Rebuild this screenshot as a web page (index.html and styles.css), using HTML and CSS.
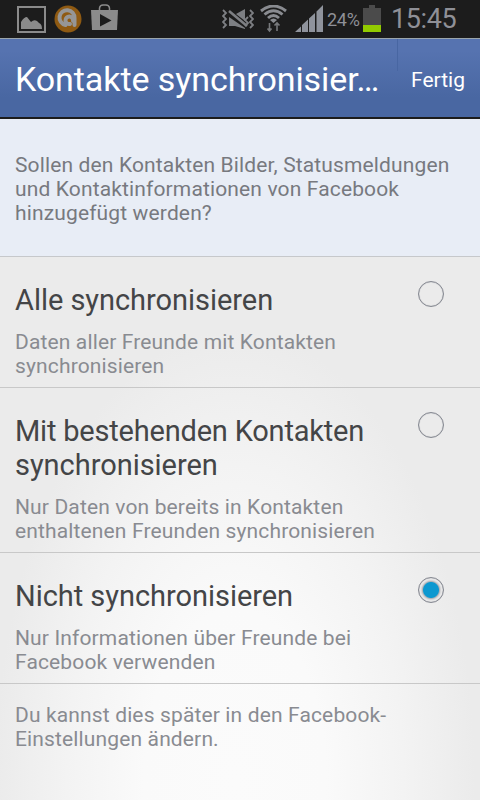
FILE: index.html
```html
<!DOCTYPE html>
<html lang="de">
<head>
    <meta charset="UTF-8">
    <meta name="viewport" content="width=device-width, initial-scale=1.0">
    <title>Kontakte synchronisieren</title>
    <link rel="stylesheet" href="styles.css">
</head>
<body>
    <div class="statusbar">
        <svg class="icon-picture" width="29" height="27" viewBox="0 0 29 27">
            <rect x="1" y="1" width="27" height="25" fill="none" stroke="#8b8b8b" stroke-width="2"/>
            <path d="M4 23V16Q7 11 10 11L14 16Q17 13 20 15L22 17Q25 18 25 23Z" fill="#8b8b8b"/>
        </svg>
        <svg class="icon-avast" width="28" height="28" viewBox="0 0 28 28">
            <circle cx="14" cy="14" r="13.500" fill="#8f5a12"/>
            <path d="M11.500 20A7.500 7.500 0 1 1 20.500 13V20M19 16A3.800 3.800 0 1 0 16 19" fill="none" stroke="#969696" stroke-width="4" stroke-linecap="round" stroke-linejoin="round"/>
        </svg>
        <svg class="icon-store" width="27" height="27" viewBox="0 0 27 27">
            <path d="M8.500 7V4Q9 1 12 1H15Q18 1 18.500 4V7" fill="none" stroke="#8b8b8b" stroke-width="1.500"/>
            <path d="M0 6H27L26 26H1Z" fill="#8b8b8b"/>
            <path d="M9 10L20.500 16.500L9 22.500Z" fill="#1c1c1c"/>
        </svg>
        <div class="status-right">
            <svg class="icon-vibrate" width="32" height="21" viewBox="0 0 32 21">
                <path d="M1 1L4 4L1 7L4 10L1 13L4 16L1 19M28 1L31 4L28 7L31 10L28 13L31 16L28 19M26 8L23 11L26 14L23 17" fill="none" stroke="#7d7f83" stroke-width="1.800"/>
                <path d="M7 8V17H13L23 20V19ZM14 5L23 0V12Z" fill="#7d7f83"/>
                <path d="M7 2L25 17" stroke="#7d7f83" stroke-width="2.500"/>
            </svg>
            <svg class="icon-wifi" width="27" height="28" viewBox="0 0 27 28">
                <path d="M1 6Q13.500 -4 26 6M4.500 9.500Q13.500 2 22.500 9.500M8 13Q13.500 8 19 13" fill="none" stroke="#898b90" stroke-width="2.900"/>
                <path d="M10 15Q13.500 12 17 15L13.500 18Z" fill="#898b90"/>
                <path d="M9.500 18V26M7.500 23.500L9.500 26L11.500 23.500M17 26V18M14.500 20.500L17 18L19.500 20.500" fill="none" stroke="#77797c" stroke-width="1.600"/>
            </svg>
            <svg class="icon-signal" width="29" height="27" viewBox="0 0 29 27">
                <path d="M0 27L6 21.500V27ZM7 27V20L13 14.500V27ZM14 27V13.500L20 8V27ZM21.500 27V6.500L28 0V27Z" fill="#8f939c"/>
            </svg>
            <span class="percent">24%</span>
            <svg class="icon-battery" width="18" height="27" viewBox="0 0 18 27">
                <path d="M6 0H12V3H18V20H0V3H6Z" fill="#4b4b4b"/>
                <rect y="20" width="18" height="7" fill="#92cb00"/>
            </svg>
            <span class="clock">15:45</span>
        </div>
    </div>
    <header class="titlebar">
        <h1>Kontakte synchronisier…</h1>
        <a class="done" href="#">Fertig</a>
    </header>
    <main>
        <p class="intro">Sollen den Kontakten Bilder, Statusmeldungen<br>und Kontaktinformationen von Facebook<br>hinzugefügt werden?</p>
        <label class="option">
            <span class="text">
                <span class="name">Alle synchronisieren</span>
                <span class="desc">Daten aller Freunde mit Kontakten<br>synchronisieren</span>
            </span>
            <input type="radio" name="sync">
        </label>
        <label class="option">
            <span class="text">
                <span class="name"><span class="tight">Mit bestehenden Kontakten</span><br>synchronisieren</span>
                <span class="desc">Nur Daten von bereits in Kontakten<br>enthaltenen Freunden synchronisieren</span>
            </span>
            <input type="radio" name="sync">
        </label>
        <label class="option">
            <span class="text">
                <span class="name">Nicht synchronisieren</span>
                <span class="desc">Nur Informationen über Freunde bei<br>Facebook verwenden</span>
            </span>
            <input type="radio" name="sync" checked>
        </label>
        <p class="note">Du kannst dies später in den Facebook-<br>Einstellungen ändern.</p>
    </main>
</body>
</html>
```
FILE: styles.css
```css
* {
    box-sizing: border-box;
}

body {
    margin: 0;
    height: 800px;
    overflow: hidden;
    font-family: Roboto, sans-serif;
    font-size: 21px;
    line-height: 24px;
    letter-spacing: 0.14px;
    background: radial-gradient(ellipse 240px 450px at 235px 780px, #fbfbfb 0%, #fafafa 38%, #f3f3f3 70%, #ebebeb 100%);
}

.statusbar {
    display: flex;
    height: 38px;
    background: #1c1c1c;
    color: #8f9097;
}

.statusbar svg {
    flex: none;
}

.icon-picture {
    margin: 6px 0 0 17px;
}

.icon-avast {
    margin: 5px 0 0 8px;
}

.icon-store {
    margin: 4px 0 0 9px;
}

.status-right {
    display: flex;
    flex: none;
    margin-left: auto;
    width: 258px;
}

.icon-vibrate {
    margin-top: 9px;
}

.icon-wifi {
    margin: 5px 0 0 6px;
}

.icon-signal {
    margin: 5px 0 0 8px;
}

.percent {
    width: 36px;
    margin-left: 3px;
    font-size: 18px;
    line-height: 40px;
    letter-spacing: -0.3px;
}

.icon-battery {
    margin-top: 5px;
}

.clock {
    margin-left: 10px;
    font-size: 27px;
    line-height: 39px;
    letter-spacing: -0.4px;
}

.titlebar {
    display: flex;
    height: 81px;
    border-top: 1px solid #9aa5ac;
    border-bottom: 2px solid #1c1c1c;
    background: linear-gradient(#5673b0 15%, #4967a2 75%);
    color: #fff;
}

.titlebar h1 {
    margin: 0;
    padding-left: 15px;
    width: 397px;
    font-size: 34px;
    font-weight: normal;
    line-height: 81px;
    letter-spacing: -0.08px;
    white-space: nowrap;
}

.done {
    flex: 1;
    padding-left: 14px;
    background: linear-gradient(#4866a2, #4866a2) no-repeat left top / 1px 32px;
    color: #fff;
    line-height: 83px;
    letter-spacing: 0;
    text-decoration: none;
}

.intro {
    margin: 0;
    height: 138px;
    padding: 34px 0 0 15px;
    border-bottom: 1px solid #c6c8cb;
    background: #e8edf6;
    color: #77797f;
    white-space: nowrap;
}

.option {
    display: flex;
    justify-content: space-between;
    padding: 26px 36px 9px 15px;
    border-bottom: 1px solid #c8c8c8;
    white-space: nowrap;
}

.name,
.desc {
    display: block;
}

.name {
    color: #444547;
    font-size: 29px;
    line-height: 34px;
    letter-spacing: -0.04px;
}

.tight {
    letter-spacing: -0.2px;
}

.desc {
    margin-top: 13px;
    color: #898b91;
}

.option input {
    appearance: none;
    flex: none;
    width: 26px;
    height: 26px;
    margin: -2px 0 0;
    border: 1px solid #858891;
    border-radius: 50%;
    box-shadow: inset 0 0 1px #858891;
}

.option input:checked {
    background: radial-gradient(circle, #0c98d0 7.500px, #aeb2b8 8.500px, #d5d5d7 9.500px, #eeeeee 11px);
}

.note {
    margin: 0;
    padding: 19px 0 0 15px;
    color: #898b91;
}
```
